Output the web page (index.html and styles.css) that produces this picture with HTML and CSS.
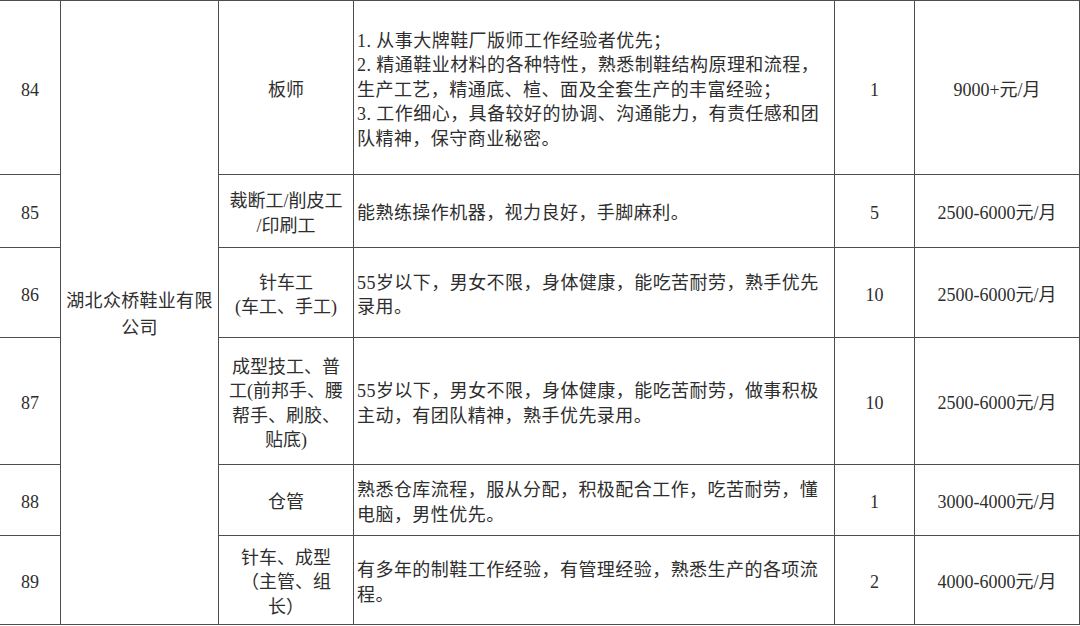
FILE: index.html
```html
<!DOCTYPE html>
<html lang="zh">
<head>
<meta charset="utf-8">
<link rel="stylesheet" href="styles.css">
</head>
<body>
<table class="jobs">
  <colgroup>
    <col class="c-no"><col class="c-co"><col class="c-job"><col class="c-desc"><col class="c-num"><col class="c-pay">
  </colgroup>
  <tr class="r84">
    <td class="center">84</td>
    <td class="center company" rowspan="6">湖北众桥鞋业有限<br>公司</td>
    <td class="center">板师</td>
    <td class="desc">1. 从事大牌鞋厂版师工作经验者优先；<br>2. 精通鞋业材料的各种特性，熟悉制鞋结构原理和流程，<br>生产工艺，精通底、楦、面及全套生产的丰富经验；<br>3. 工作细心，具备较好的协调、沟通能力，有责任感和团<br>队精神，保守商业秘密。</td>
    <td class="center">1</td>
    <td class="center">9000+元/月</td>
  </tr>
  <tr class="r85">
    <td class="center">85</td>
    <td class="center">裁断工/削皮工<br>/印刷工</td>
    <td class="desc">能熟练操作机器，视力良好，手脚麻利。</td>
    <td class="center">5</td>
    <td class="center">2500-6000元/月</td>
  </tr>
  <tr class="r86">
    <td class="center">86</td>
    <td class="center">针车工<br>(车工、手工)</td>
    <td class="desc">55岁以下，男女不限，身体健康，能吃苦耐劳，熟手优先<br>录用。</td>
    <td class="center">10</td>
    <td class="center">2500-6000元/月</td>
  </tr>
  <tr class="r87">
    <td class="center">87</td>
    <td class="center">成型技工、普<br>工(前邦手、腰<br>帮手、刷胶、<br>贴底)</td>
    <td class="desc">55岁以下，男女不限，身体健康，能吃苦耐劳，做事积极<br>主动，有团队精神，熟手优先录用。</td>
    <td class="center">10</td>
    <td class="center">2500-6000元/月</td>
  </tr>
  <tr class="r88">
    <td class="center">88</td>
    <td class="center">仓管</td>
    <td class="desc">熟悉仓库流程，服从分配，积极配合工作，吃苦耐劳，懂<br>电脑，男性优先。</td>
    <td class="center">1</td>
    <td class="center">3000-4000元/月</td>
  </tr>
  <tr class="r89">
    <td class="center">89</td>
    <td class="center">针车、成型<br>（主管、组<br>长）</td>
    <td class="desc">有多年的制鞋工作经验，有管理经验，熟悉生产的各项流<br>程。</td>
    <td class="center">2</td>
    <td class="center">4000-6000元/月</td>
  </tr>
</table>
</body>
</html>
```
FILE: styles.css
```css
html, body {
  margin: 0;
  padding: 0;
  background: #ffffff;
}
body {
  width: 1080px;
  height: 626px;
  overflow: hidden;
}
.jobs {
  border-collapse: collapse;
  table-layout: fixed;
  width: 1080px;
  margin-left: -1px;
  font-family: "Liberation Serif", "Noto Sans CJK SC", serif;
  font-size: 18px;
  line-height: 24.5px;
  color: #2e2e2e;
}
.c-no { width: 61px; }
.c-co { width: 158px; }
.c-job { width: 135px; }
.c-desc { width: 481px; }
.c-num { width: 80px; }
.c-pay { width: 165px; }
.jobs td {
  border: 1.5px solid #4d4d4d;
  padding: 5px 1px 0;
  vertical-align: middle;
  overflow: hidden;
  white-space: nowrap;
}
.jobs td.center { text-align: center; }
.jobs td.desc { text-align: left; padding-left: 3px; letter-spacing: 0.45px; }
.jobs td.company { line-height: 27px; letter-spacing: 0.3px; }
.r84 { height: 174px; }
.r85 { height: 73px; }
.r86 { height: 90px; }
.r87 { height: 127px; }
.r88 { height: 71px; }
.r89 { height: 89px; }
```
